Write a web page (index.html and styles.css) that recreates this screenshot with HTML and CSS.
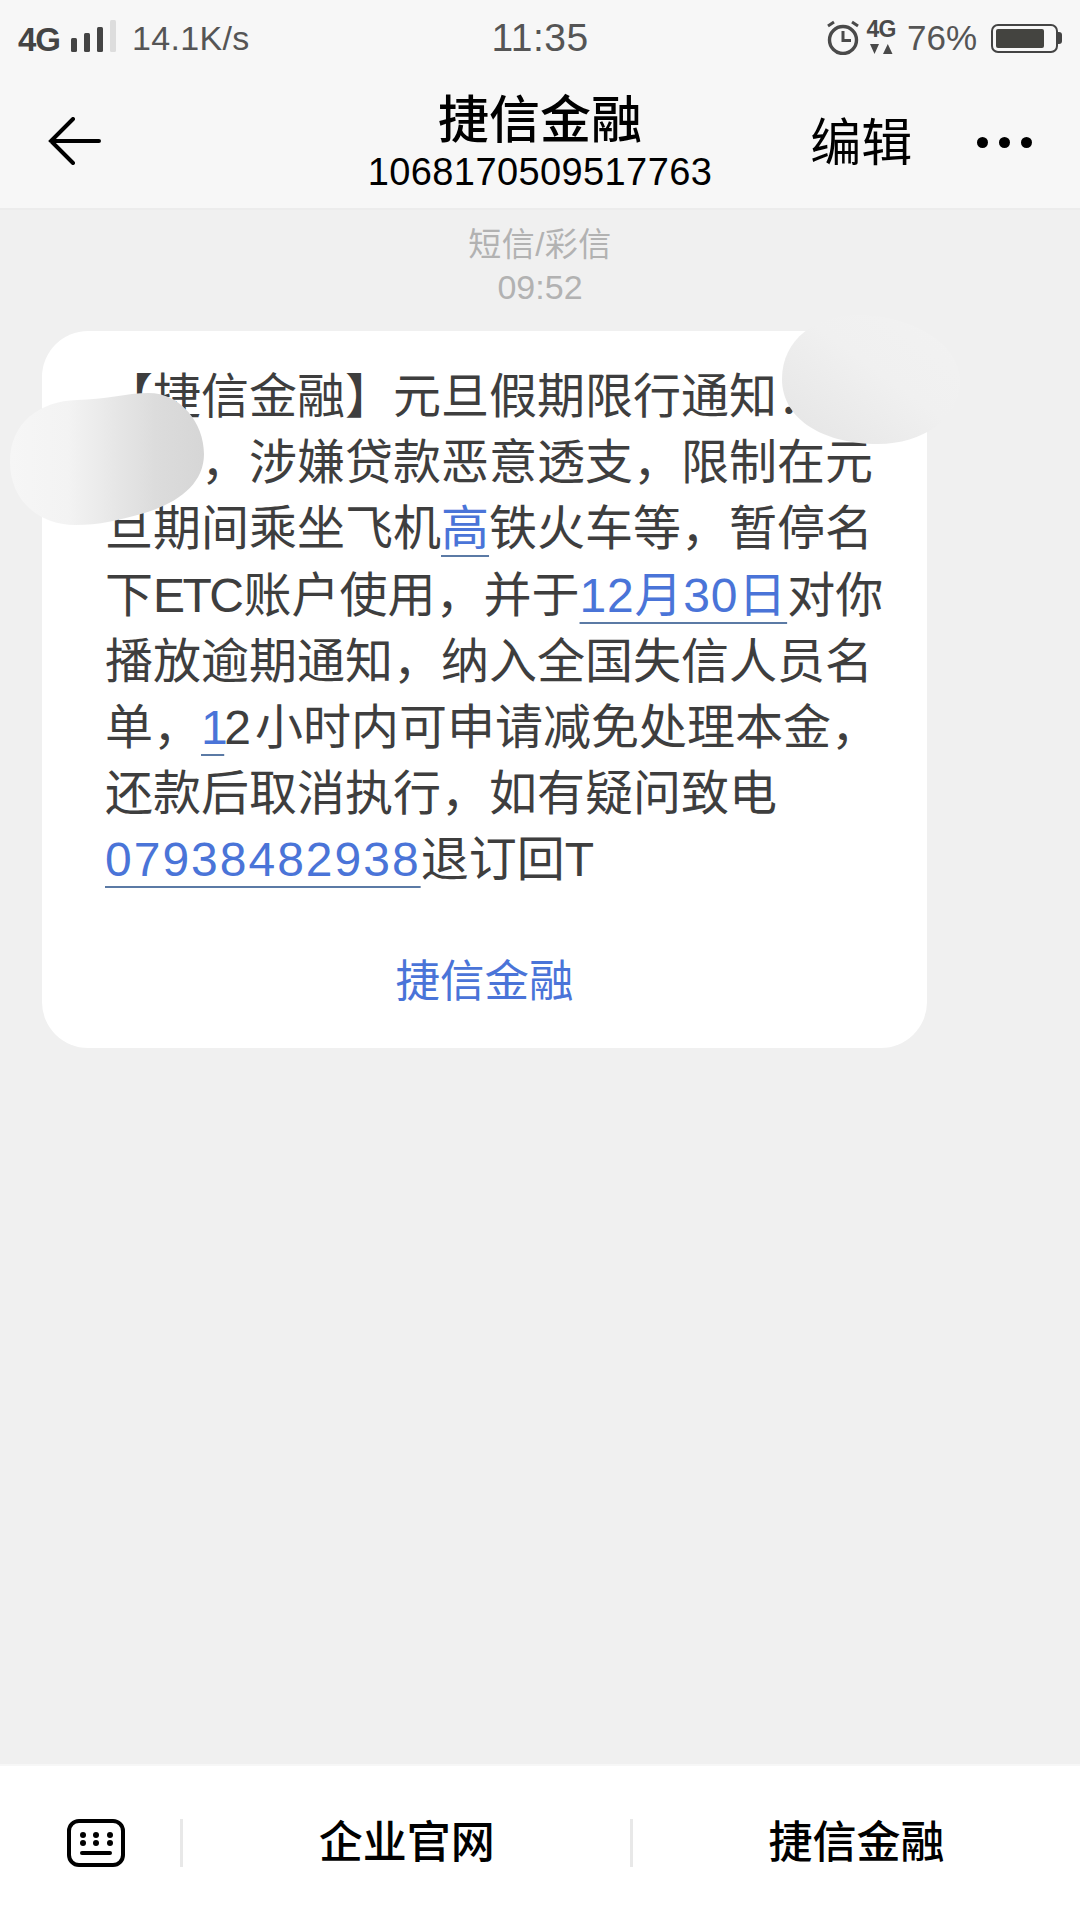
FILE: index.html
```html
<!DOCTYPE html>
<html lang="zh-CN">
<head>
<meta charset="UTF-8">
<meta name="viewport" content="width=device-width, initial-scale=1.0">
<title>捷信金融</title>
<link rel="stylesheet" href="styles.css">
</head>
<body>
<div class="screen">
  <header class="top">
    <div class="status">
      <div class="status-left">
        <span class="net">4G</span>
        <svg class="signal" width="46" height="34" viewBox="0 0 46 34">
          <rect x="1" y="19" width="6" height="14" rx="1.5" fill="#444"/>
          <rect x="14" y="14" width="6" height="19" rx="1.5" fill="#444"/>
          <rect x="27" y="8" width="6" height="25" rx="1.5" fill="#444"/>
          <rect x="40" y="1" width="6" height="32" rx="1.5" fill="#ddd"/>
        </svg>
        <span class="speed">14.1K/s</span>
      </div>
      <div class="clock">11:35</div>
      <div class="status-right">
        <svg class="alarm" width="32" height="35" viewBox="0 0 32 35">
          <circle cx="16" cy="20" r="13.5" fill="none" stroke="#4a4a4a" stroke-width="3.4"/>
          <path d="M16 11v9.500h8" fill="none" stroke="#4a4a4a" stroke-width="3"/>
          <path d="M1 6l6-4M31 6l-6-4" fill="none" stroke="#4a4a4a" stroke-width="3"/>
        </svg>
        <div class="data">
          <span class="data-net">4G</span>
          <svg width="24" height="11" viewBox="0 0 24 11">
            <path d="M1 1h9l-4.500 10zM14 11h9.500l-4.700-10z" fill="#4a4a4a"/>
          </svg>
        </div>
        <span class="percent">76%</span>
        <div class="battery">
          <div class="battery-body"><div class="battery-fill"></div></div>
          <div class="battery-nub"></div>
        </div>
      </div>
    </div>
    <nav class="bar">
      <svg class="back" width="54" height="48" viewBox="0 0 54 48">
        <path d="M51 24H3M25 2L3 24l22 22" fill="none" stroke="#000" stroke-width="4" stroke-linecap="round" stroke-linejoin="miter"/>
      </svg>
      <div class="contact">
        <div class="contact-name">捷信金融</div>
        <div class="contact-num">1068170509517763</div>
      </div>
      <div class="actions">
        <div class="edit">编辑</div>
        <div class="dots"><i></i><i></i><i></i></div>
      </div>
    </nav>
  </header>

  <main class="chat">
    <div class="meta">
      <div class="meta-kind">短信/彩信</div>
      <div class="meta-time">09:52</div>
    </div>
    <div class="bubble">
      <p class="msg">【捷信金融】元旦假期限行通知：<br>
<span class="gap"></span>，涉嫌贷款恶意透支，限制在元<br>
旦期间乘坐飞机<a class="link">高</a>铁火车等，暂停名<br>
下<span class="latin">ETC</span>账户使用，并于<a class="link link-date">12月30日</a>对你<br>
播放逾期通知，纳入全国失信人员名<br>
单，<a class="link link-one">1</a><span class="two">2</span>小时内可申请减免处理本金，<br>
还款后取消执行，如有疑问致电<br>
<a class="link link-phone">07938482938</a>退订回T</p>
      <div class="sign">捷信金融</div>

      <svg class="blob blob-left" width="194" height="132" viewBox="0 0 196 134" preserveAspectRatio="none">
        <defs>
          <linearGradient id="fadeLeft" x1="0" y1="0" x2="1" y2="0">
            <stop offset="0" stop-color="#f6f6f6"/>
            <stop offset="0.3" stop-color="#f3f3f3"/>
            <stop offset="0.75" stop-color="#dcdcdc"/>
            <stop offset="1" stop-color="#d6d6d6"/>
          </linearGradient>
        </defs>
        <path d="M0 70C0 30 30 8 68 7C95 7 118 0 140 0C172 0 196 30 196 62C196 92 170 112 135 122C110 129 90 134 66 134C28 134 0 108 0 70Z" fill="url(#fadeLeft)"/>
      </svg>
      <svg class="blob blob-right" width="178" height="130" viewBox="0 0 178 130">
        <defs>
          <linearGradient id="fadeRight" x1="0" y1="1" x2="1" y2="0">
            <stop offset="0" stop-color="#e4e4e4"/>
            <stop offset="0.55" stop-color="#f0f0f0"/>
            <stop offset="1" stop-color="#f2f2f2"/>
          </linearGradient>
        </defs>
        <path d="M0 64C0 24 34 0 76 0C128 0 178 28 178 66C178 104 140 129 96 129C44 129 0 106 0 64Z" fill="url(#fadeRight)"/>
      </svg>
    </div>
  </main>

  <footer class="menu">
    <div class="menu-key">
      <svg width="60" height="50" viewBox="0 0 60 50">
        <rect x="3" y="3" width="54" height="44" rx="10" fill="none" stroke="#000" stroke-width="4"/>
        <g fill="#000">
          <circle cx="17" cy="17" r="3"/><circle cx="30" cy="17" r="3"/><circle cx="44" cy="17" r="3"/>
          <circle cx="17" cy="25" r="3"/><circle cx="30" cy="25" r="3"/><circle cx="44" cy="25" r="3"/>
        </g>
        <rect x="14" y="33" width="32" height="4" rx="2" fill="#000"/>
      </svg>
    </div>
    <div class="menu-item">企业官网</div>
    <div class="menu-item">捷信金融</div>
  </footer>
</div>
</body>
</html>
```

FILE: styles.css
```css
body {
  margin: 0;
  padding: 0;
  font-family: "Liberation Sans", "Noto Sans CJK SC", sans-serif;
  background-color: #f0f0f0;
}

.screen {
  width: 1080px;
  height: 1920px;
  display: flex;
  flex-direction: column;
  overflow: hidden;
}

/* status bar + title bar */
.top {
  height: 210px;
  box-sizing: border-box;
  background-color: #f7f7f7;
  border-bottom: 2px solid #ececec;
  flex-shrink: 0;
}

.status {
  height: 76px;
  display: flex;
  align-items: center;
  padding: 0 18px;
  color: #555;
}

.status-left,
.status-right {
  flex: 1;
  display: flex;
  align-items: center;
}

.status-right {
  justify-content: flex-end;
}

.net {
  font-size: 33px;
  font-weight: bold;
  color: #444;
  margin-top: 3px;
  letter-spacing: -1px;
}

.signal {
  margin-left: 10px;
  margin-top: -5px;
}

.speed {
  font-size: 34px;
  margin-left: 16px;
  letter-spacing: 0.3px;
}

.clock {
  font-size: 39px;
  letter-spacing: 0.5px;
}

.alarm {
  margin-right: 8px;
  margin-top: -1px;
}

.data {
  display: flex;
  flex-direction: column;
  align-items: center;
  width: 28px;
  margin-top: -3px;
}

.data-net {
  font-size: 23px;
  line-height: 20px;
  font-weight: bold;
  color: #4a4a4a;
  letter-spacing: -1px;
  margin-bottom: 4px;
}

.percent {
  font-size: 35px;
  margin-left: 12px;
}

.battery {
  display: flex;
  align-items: center;
  margin-left: 14px;
}

.battery-body {
  width: 67px;
  height: 29px;
  box-sizing: border-box;
  border: 2px solid #444;
  border-radius: 7px;
  padding: 3px;
}

.battery-fill {
  width: 48px;
  height: 100%;
  background-color: #444440;
  border-radius: 2px;
}

.battery-nub {
  width: 4px;
  height: 12px;
  background-color: #444;
  border-radius: 0 3px 3px 0;
}

.bar {
  height: 132px;
  display: grid;
  grid-template-columns: 1fr auto 1fr;
  align-items: center;
  padding-left: 48px;
}

.back {
  margin-bottom: 2px;
}

.contact {
  text-align: center;
  color: #000;
  margin-left: -48px;
  padding-top: 2px;
}

.contact-name {
  font-size: 51px;
  font-weight: 500;
  line-height: 58px;
}

.contact-num {
  font-size: 38px;
  line-height: 44px;
  letter-spacing: 0.4px;
}

.actions {
  display: flex;
  align-items: center;
  padding-left: 98px;
}

.edit {
  font-size: 51px;
  line-height: 66px;
  color: #000;
  margin-top: 3px;
}

.dots {
  display: flex;
  gap: 11px;
  margin-left: 65px;
}

.dots i {
  width: 11px;
  height: 11px;
  border-radius: 50%;
  background-color: #000;
}

/* message list */
.chat {
  flex: 1;
  padding: 0 42px;
}

.meta {
  text-align: center;
  color: #b2b2b2;
  font-size: 33px;
  line-height: 42px;
  padding-top: 14px;
  margin-left: -42px;
  margin-right: -42px;
}

.meta-kind {
  letter-spacing: 0.5px;
}

.meta-time {
  font-size: 34px;
}

.bubble {
  position: relative;
  width: 885px;
  height: 717px;
  margin-top: 23px;
  background-color: white;
  border-radius: 46px;
  box-sizing: border-box;
  padding: 33px 0 0 63px;
}

.msg {
  margin: 0;
  font-size: 48px;
  line-height: 66.2px;
  color: #3e3e3e;
  white-space: nowrap;
}

.gap {
  display: inline-block;
  width: 96px;
}

.latin {
  letter-spacing: -2.5px;
  margin-right: 2px;
}

.link {
  color: #4a74d8;
  text-decoration: underline;
  text-decoration-color: #5b7aa5;
  text-decoration-thickness: 2px;
  text-underline-offset: 10px;
}

.link-date {
  letter-spacing: 0.8px;
}

.link-phone {
  letter-spacing: 2px;
}

.link-one {
  letter-spacing: -3.5px;
}

.two {
  letter-spacing: 4px;
}

.sign {
  margin-top: 58px;
  margin-left: -63px;
  text-align: center;
  font-size: 44.500px;
  line-height: 60px;
  color: #4a74d8;
}

.blob {
  position: absolute;
}

.blob-left {
  left: -32px;
  top: 62px;
}

.blob-right {
  left: 740px;
  top: -16px;
}

/* bottom menu */
.menu {
  height: 156px;
  background-color: white;
  border-top: 2px solid #f7f7f7;
  box-sizing: border-box;
  display: flex;
  align-items: center;
  flex-shrink: 0;
}

.menu-key {
  width: 181px;
  height: 48px;
  display: flex;
  align-items: center;
  padding-left: 66px;
  box-sizing: border-box;
}

.menu-item {
  height: 48px;
  line-height: 48px;
  width: 450px;
  text-align: center;
  font-size: 44px;
  font-weight: 500;
  color: #000;
  border-left: 3px solid #e8e8e8;
}
```
